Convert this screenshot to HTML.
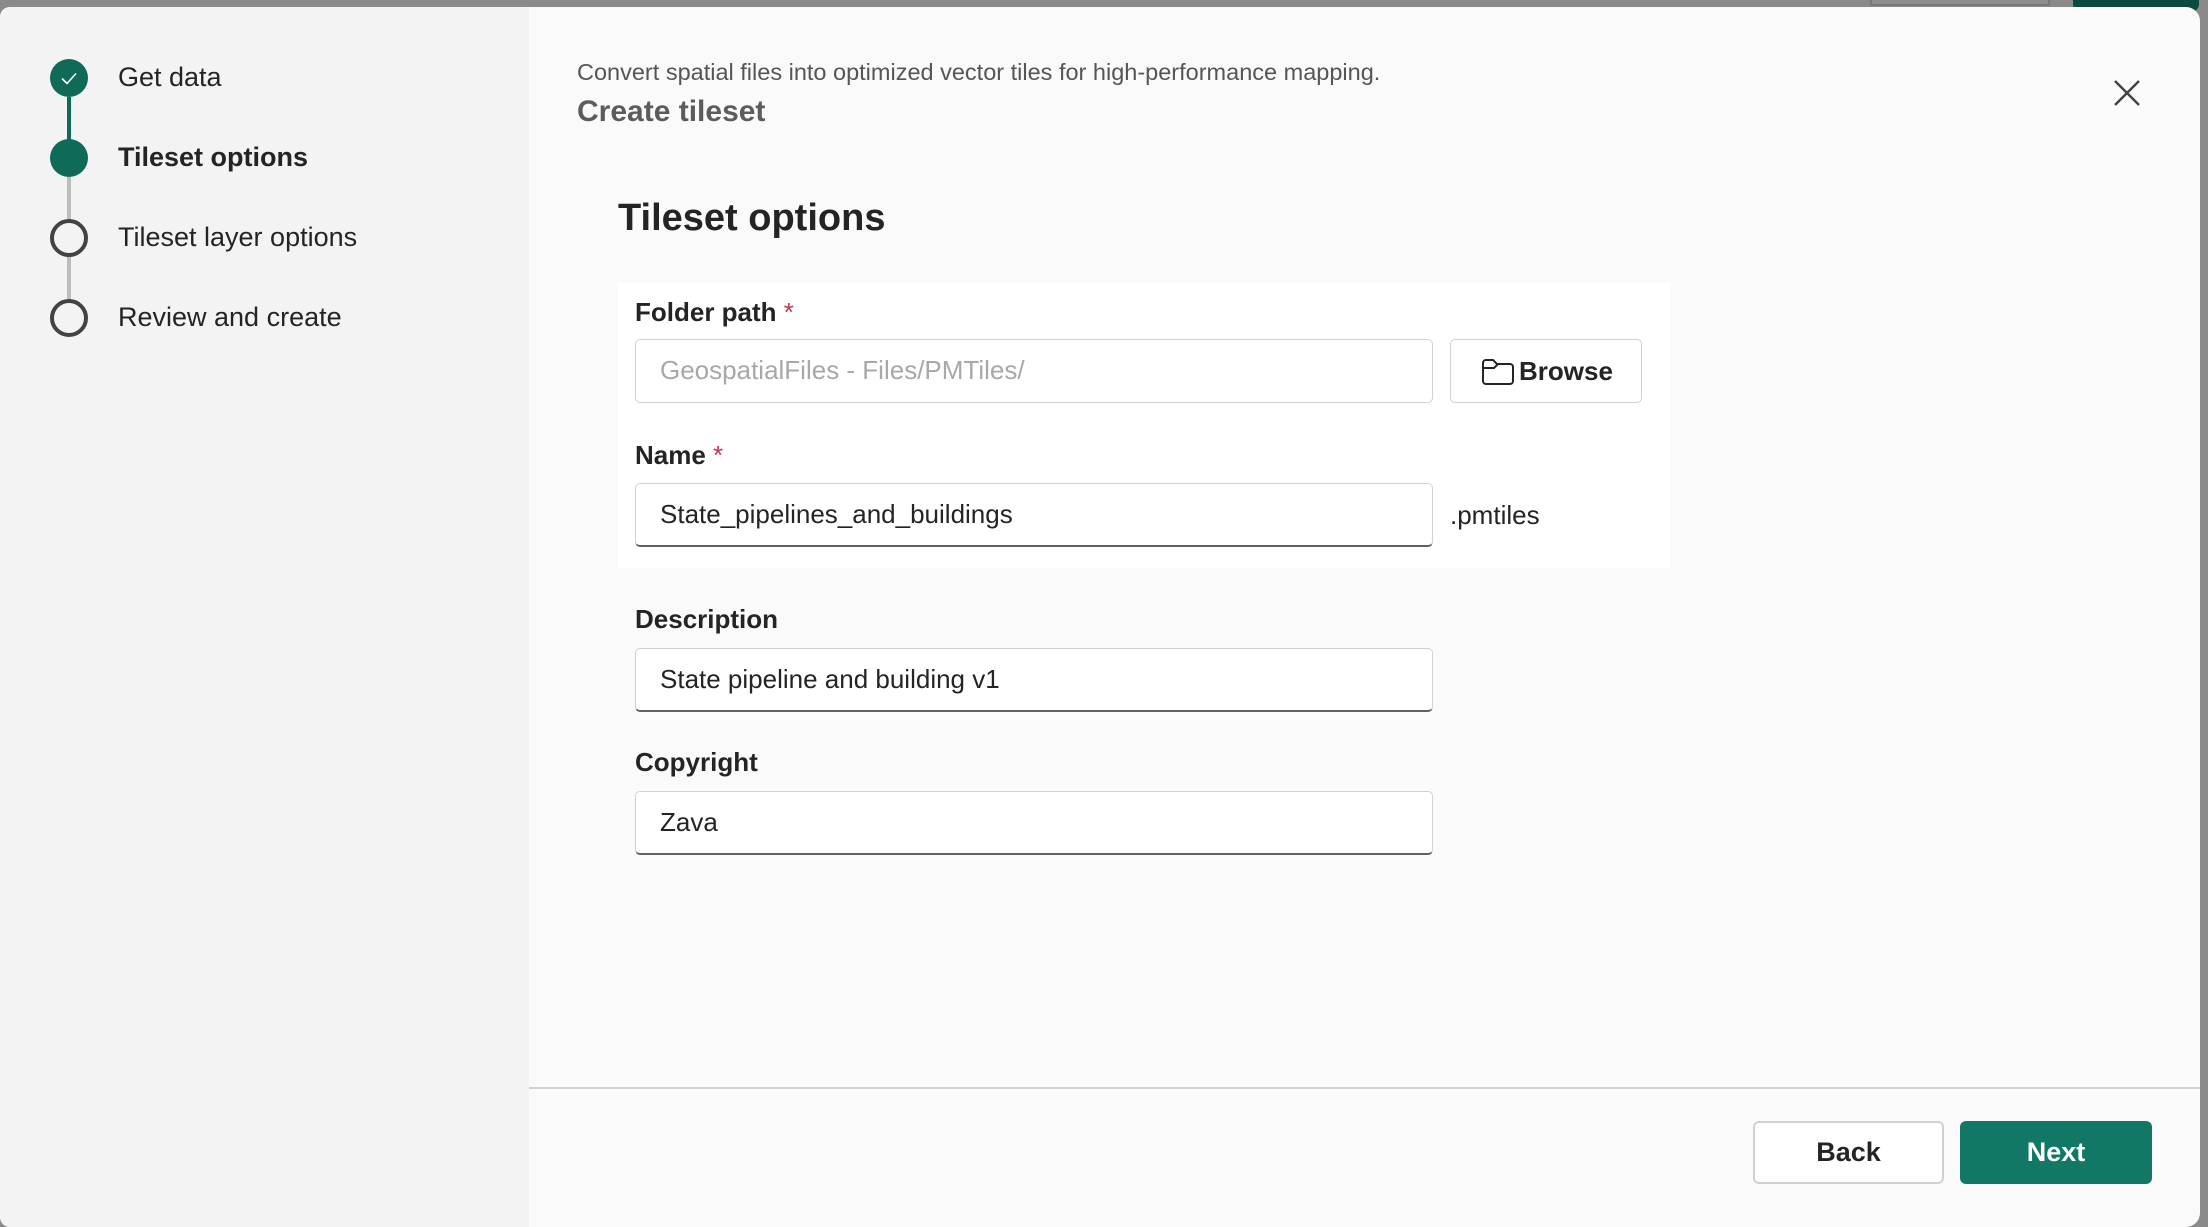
<!DOCTYPE html>
<html><head><meta charset="utf-8"><style>
*{box-sizing:border-box;margin:0;padding:0}
body{width:2208px;height:1214px;background:#8a8a8a;position:relative;overflow:hidden;font-family:"Liberation Sans",sans-serif;color:#242424}
.topstuff{position:absolute;left:1870px;top:0;width:180px;height:6px;border:2px solid #777;border-top:none;background:#8d8d8d}
.greenbtn{position:absolute;left:2073px;top:-10px;width:126px;height:22px;background:#0c4a3f;border-radius:8px}
.modal{position:absolute;left:0;top:7px;width:2200px;height:1220px;background:#fafafa;border-radius:10px 14px 14px 10px;overflow:hidden}
.side{position:absolute;left:0;top:0;width:529px;height:100%;background:#f3f3f3}
.step{position:absolute;left:118px;font-size:27px;color:#242424}
.circ{position:absolute;left:50px;width:38px;height:38px;border-radius:50%}
.line{position:absolute;left:67px;width:4px}
.abs{position:absolute}
.lbl{position:absolute;left:635px;font-size:26px;font-weight:bold;color:#242424}
.req{color:#c4314b;font-weight:normal}
.inp{position:absolute;left:635px;width:798px;height:64px;background:#fff;border:1px solid #d1d1d1;border-bottom:2px solid #616161;border-radius:5px;font-size:26px;padding-left:24px;line-height:60px}
</style></head><body>
<div class="topstuff"></div><div class="greenbtn"></div>
<div class="modal">
 <div class="side">
  <div class="line" style="top:90px;height:64px;background:#0f6a58"></div>
  <div class="line" style="top:170px;height:62px;background:#bdbdbd"></div>
  <div class="line" style="top:250px;height:62px;background:#bdbdbd"></div>
  <div class="circ" style="top:52px;background:#0f6a58"><svg width="38" height="38"><path d="M12 19.5l5 5 9-10" stroke="#fff" stroke-width="1.6" fill="none"/></svg></div>
  <div class="circ" style="top:132px;background:#0f6a58"></div>
  <div class="circ" style="top:212px;border:4px solid #424242;background:#f3f3f3"></div>
  <div class="circ" style="top:292px;border:4px solid #424242;background:#f3f3f3"></div>
  <div class="step" style="top:55px">Get data</div>
  <div class="step" style="top:135px;font-weight:bold">Tileset options</div>
  <div class="step" style="top:215px">Tileset layer options</div>
  <div class="step" style="top:295px">Review and create</div>
 </div>
 <div class="abs" style="left:577px;top:52px;font-size:23.5px;color:#555">Convert spatial files into optimized vector tiles for high-performance mapping.</div>
 <div class="abs" style="left:577px;top:88px;font-size:30px;font-weight:bold;color:#5c5c5c">Create tileset</div>
 <svg class="abs" style="left:2113px;top:72px" width="28" height="28"><path d="M2 2L26 26M26 2L2 26" stroke="#424242" stroke-width="2.4"/></svg>
 <div class="abs" style="left:618px;top:190px;font-size:38px;font-weight:bold;color:#242424">Tileset options</div>
 <div class="abs" style="left:618px;top:276px;width:1052px;height:285px;background:#fff"></div>
 <div class="lbl" style="top:290px">Folder path <span class="req">*</span></div>
 <div class="inp" style="top:332px;border-bottom:1px solid #d1d1d1;color:#a8a8a8">GeospatialFiles - Files/PMTiles/</div>
 <div class="abs" style="left:1450px;top:332px;width:192px;height:64px;background:#fff;border:1px solid #d1d1d1;border-radius:5px;font-size:26px;font-weight:bold;line-height:62px;padding-left:68px">Browse</div>
 <svg class="abs" style="left:1481px;top:351px" width="34" height="28"><path d="M2 5a3 3 0 0 1 3-3h7l4 4h13a3 3 0 0 1 3 3v14a3 3 0 0 1-3 3H5a3 3 0 0 1-3-3z M2 10h11l4-4" stroke="#242424" stroke-width="2" fill="none"/></svg>
 <div class="lbl" style="top:433px">Name <span class="req">*</span></div>
 <div class="inp" style="top:476px">State_pipelines_and_buildings</div>
 <div class="abs" style="left:1450px;top:493px;font-size:26px">.pmtiles</div>
 <div class="lbl" style="top:597px">Description</div>
 <div class="inp" style="top:641px">State pipeline and building v1</div>
 <div class="lbl" style="top:740px">Copyright</div>
 <div class="inp" style="top:784px">Zava</div>
 <div class="abs" style="left:529px;top:1080px;width:1680px;height:2px;background:#d1d1d1"></div>
 <div class="abs" style="left:1753px;top:1114px;width:191px;height:63px;background:#fff;border:2px solid #d1d1d1;border-radius:6px;text-align:center;line-height:59px;font-size:27px;font-weight:bold">Back</div>
 <div class="abs" style="left:1960px;top:1114px;width:192px;height:63px;background:#127866;border-radius:6px;text-align:center;line-height:63px;font-size:27px;font-weight:bold;color:#fff">Next</div>
</div>
</body></html>
